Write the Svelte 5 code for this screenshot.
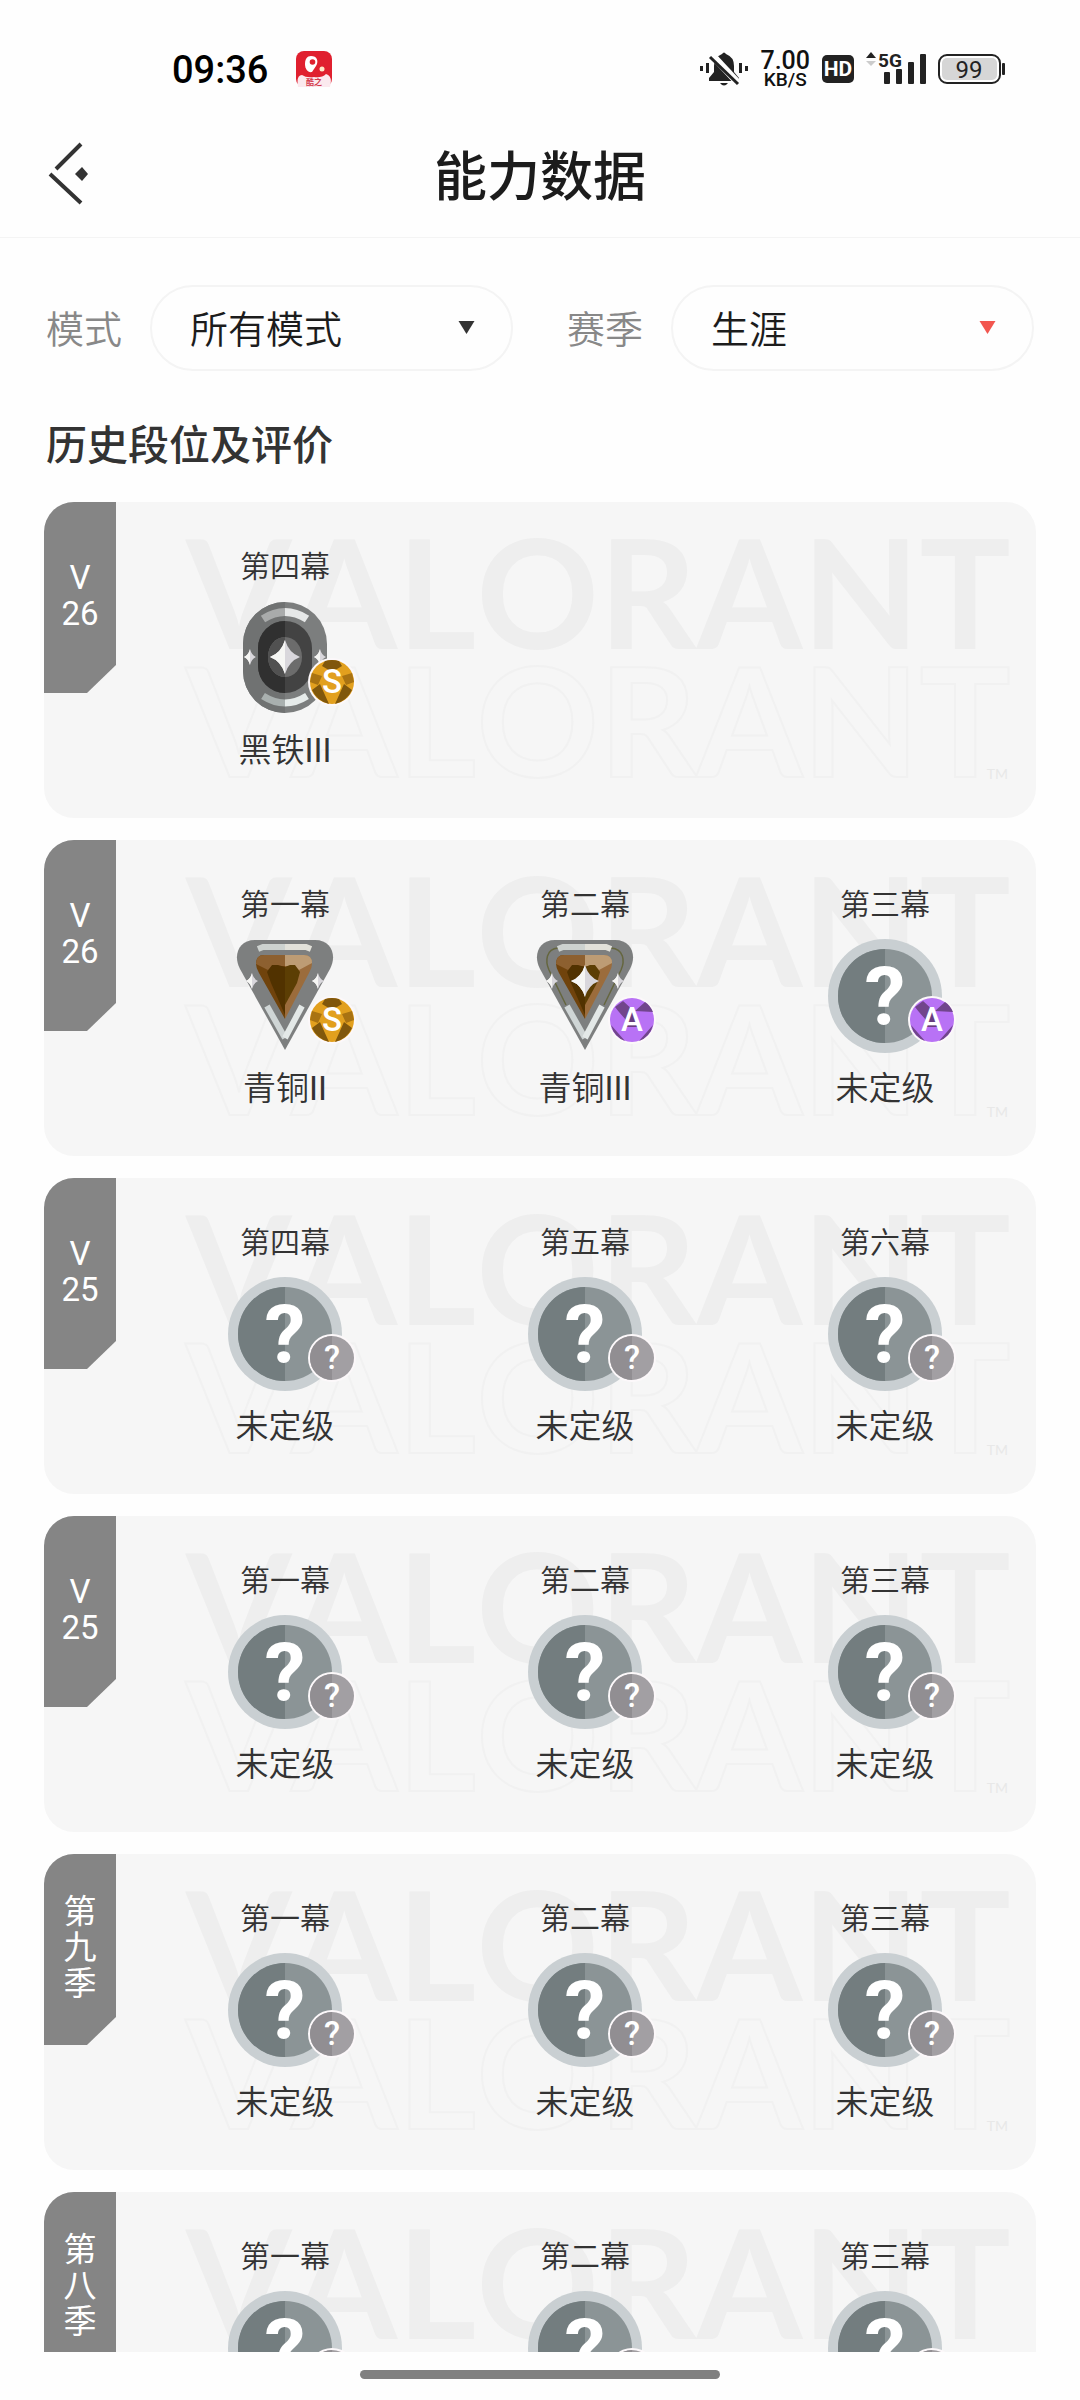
<script lang="ts">
  type Rank = "iron3" | "bronze2" | "bronze3" | "none";
  type Grade = "S" | "A" | "?";
  type Act = { name: string; rank: Rank; grade: Grade };

  const RANK_LABEL: Record<Rank, { name: string; tier: string }> = {
    iron3: { name: "黑铁", tier: "III" },
    bronze2: { name: "青铜", tier: "II" },
    bronze3: { name: "青铜", tier: "III" },
    none: { name: "未定级", tier: "" },
  };

  const WORDMARK = "VALORANT".split("");

  // an act nobody has played yet
  const unranked = (name: string): Act => ({ name, rank: "none", grade: "?" });

  const seasons: { tab: string[]; acts: Act[] }[] = [
    { tab: ["V", "26"], acts: [{ name: "第四幕", rank: "iron3", grade: "S" }] },
    {
      tab: ["V", "26"],
      acts: [
        { name: "第一幕", rank: "bronze2", grade: "S" },
        { name: "第二幕", rank: "bronze3", grade: "A" },
        { name: "第三幕", rank: "none", grade: "A" },
      ],
    },
    { tab: ["V", "25"], acts: ["第四幕", "第五幕", "第六幕"].map(unranked) },
    { tab: ["V", "25"], acts: ["第一幕", "第二幕", "第三幕"].map(unranked) },
    { tab: ["第", "九", "季"], acts: ["第一幕", "第二幕", "第三幕"].map(unranked) },
    { tab: ["第", "八", "季"], acts: ["第一幕", "第二幕", "第三幕"].map(unranked) },
  ];

  let mode = $state("all");
  let season = $state("career");
</script>

{#snippet star(cx: number, cy: number, w: number, h: number)}
  <g transform="translate({cx} {cy}) scale({w} {h})">
    <path d="M0-1Q.25-.25 1 0Q.25.25 0 1Q-.25.25-1 0Q-.25-.25 0-1Z" fill="#d9d7dc" />
    <path d="M0-1Q-.25-.25-1 0Q-.25.25 0 1Z" fill="#f6f6f4" />
  </g>
{/snippet}

{#snippet rankIcon(rank: Rank)}
  <svg class="rank" viewBox="0 0 114 114" aria-hidden="true">
    {#if rank === "iron3"}
      <rect x="15" y="1" width="84" height="111" rx="42" fill="#7c7e7e" />
      <path d="M57 1A42 42 0 0 0 15 43V70A42 42 0 0 0 57 112Z" fill="#707272" />
      <path d="M35 18Q46 11 57 11" fill="none" stroke="#a9abab" stroke-width="8" />
      <path d="M57 11Q68 11 79 18" fill="none" stroke="#e6e8e8" stroke-width="8" />
      <path d="M35 95Q46 102 57 102" fill="none" stroke="#a9b0af" stroke-width="7" />
      <path d="M57 102Q68 102 79 95" fill="none" stroke="#e6ebea" stroke-width="7" />
      <rect x="30" y="20" width="54" height="72" rx="27" fill="#434343" />
      <path d="M57 20A27 27 0 0 0 30 47V65A27 27 0 0 0 57 92Z" fill="#303030" />
      <ellipse cx="57" cy="56" rx="17" ry="20" fill="#6c6c6c" />
      <path d="M57 36A17 20 0 0 0 57 76Z" fill="#515151" />
      {@render star(57, 56, 15, 17)}
      {@render star(22, 56, 6, 8)}
      {@render star(92, 56, 6, 8)}
    {:else if rank === "none"}
      <circle cx="57" cy="57" r="57" fill="#c9cfd2" />
      <circle cx="57" cy="57" r="47" fill="#8b9496" />
      <path d="M57 10A47 47 0 0 0 57 104Z" fill="#737d7f" />
      <text class="mark" x="57" y="86" text-anchor="middle">?</text>
    {:else}
      <path d="M27 1H87C104 1 109 17 102 30L57 111L12 30C5 17 10 1 27 1Z" fill="#7d7f7f" />
      {#if rank === "bronze3"}
        <path
          d="M30 9C18 10 17 22 21 31L38 66M83 9C96 10 97 22 93 31L76 66"
          fill="none"
          stroke="#65663f"
          stroke-width="1.500"
        />
      {/if}
      <path d="M30 10L35 8H57" fill="none" stroke="#cdd2cf" stroke-width="6" />
      <path d="M57 8H78L83 10" fill="none" stroke="#e2e1d9" stroke-width="6" />
      <path d="M39 67L57 99" fill="none" stroke="#cfd5d5" stroke-width="6" />
      <path d="M74 67L57 99" fill="none" stroke="#e3e8e7" stroke-width="6" />
      <path d="M57 16H36Q28 16 28 25Q28 29 31 34L57 80Z" fill="#70430c" />
      <path d="M57 16H36Q28 16 28 25L40 31L44 27H57Z" fill="#8d6030" />
      <path d="M57 16H76Q84 16 84 25Q84 29 81 34L57 80Z" fill="#9b6c3c" />
      <path d="M57 16H76Q84 16 84 24L71 31L67 27H57Z" fill="#bd9c74" />
      <path d="M57 28L50 26H44L39 33L43 44L57 76Z" fill="#513200" />
      <path d="M57 28L62 26H67L72 33L69 44L57 66Z" fill="#5c3e04" />
      {#if rank === "bronze3"}
        {@render star(57, 42, 14, 16)}
      {/if}
      {@render star(24, 42, 6, 8)}
      {@render star(90, 42, 6, 8)}
    {/if}
  </svg>
{/snippet}

{#snippet gradeBadge(grade: Grade)}
  <svg class="badge" viewBox="0 0 48 48" aria-hidden="true">
    <circle cx="24" cy="24" r="24" fill="#fcf8fa" />
    {#if grade === "?"}
      <circle cx="24" cy="24" r="22" fill="#a29fa3" />
      <path d="M24 2A22 22 0 0 0 24 46Z" fill="#918e92" />
    {:else if grade === "S"}
      <circle cx="24" cy="24" r="22" fill="#e2a01e" />
      <path d="M17 3Q24 1 31 3L34 8L24 14L14 8Z" fill="#80570c" />
      <path d="M4 15L14 18L10 27L2 24ZM44 15L34 18L38 27L46 24Z" fill="#a97312" />
      <path d="M4 32L12 26L21 46Q9 43 4 32ZM44 32L36 26L27 46Q39 43 44 32Z" fill="#80570c" />
    {:else}
      <circle cx="24" cy="24" r="22" fill="#b872f5" />
      <path d="M7 11L15 5L26 15L18 24L11 16ZM27 15L37 6Q42 9 45 16Z" fill="#71458c" />
      <path d="M3 29L17 45Q6 41 3 29ZM45 29L31 45Q42 41 45 29Z" fill="#71458c" />
      <path d="M24 14L31 31H17Z" fill="#683d80" />
    {/if}
    <text class="letter" x="24" y="35" text-anchor="middle">{grade}</text>
  </svg>
{/snippet}

<div class="screen">
  <div class="status">
    <div class="side">
      <span class="time">09:36</span>
      <svg width="36" height="36" viewBox="0 0 36 36" aria-hidden="true">
        <rect width="36" height="36" rx="8" fill="#e0202f" />
        <path d="M2 36Q0 24 6 24Q10 27 18 26Q26 27 30 23Q37 25 34 36Z" fill="#fbe9ee" />
        <path d="M15 5C21 5 23 10 20 15L16 21C12 22 9 18 9 13C9 8 11 5 15 5Z" fill="#fff" />
        <circle cx="16.500" cy="11" r="2.800" fill="#e0202f" />
        <circle cx="26" cy="18" r="2.500" fill="#ffe9c9" />
        <text class="app-name" x="18" y="34" text-anchor="middle">酷之</text>
      </svg>
    </div>

    <div class="side right">
      <svg width="48" height="34" viewBox="0 0 48 34" fill="#222" aria-hidden="true">
        <rect x="0" y="14" width="3" height="5" />
        <rect x="6" y="11" width="3" height="10" />
        <rect x="39" y="11" width="3" height="10" />
        <rect x="45" y="14" width="3" height="5" />
        <path d="M22 2Q24-1 26 2Q34 5 34 14V20L39 26V29H9V26L14 20V14Q14 5 22 2Z" />
        <path d="M20 31H28Q24 36 20 31Z" />
        <path d="M12 3L39 32" stroke="#fefefe" stroke-width="7" />
        <path d="M10 5L38 32" stroke="#222" stroke-width="3" />
      </svg>
      <span class="speed"><b>7.00</b><small>KB/S</small></span>
      <span class="hd">HD</span>
      <svg width="60" height="34" viewBox="0 0 60 34" fill="#222" aria-hidden="true">
        <path d="M0 6L5 0L10 6Z" />
        <path d="M0 9L5 14L10 9Z" fill="#ccc" />
        <text class="net" x="12" y="15">5G</text>
        <rect x="18" y="20" width="6" height="12" rx="1" />
        <rect x="30" y="17" width="6" height="15" rx="1" />
        <rect x="42" y="10" width="6" height="22" rx="1" />
        <rect x="54" y="2" width="6" height="30" rx="1" />
      </svg>
      <svg width="67" height="30" viewBox="0 0 67 30" aria-hidden="true">
        <rect x="1" y="1" width="61" height="28" rx="8" fill="#fefefe" stroke="#222" stroke-width="2" />
        <rect x="4" y="4" width="55" height="22" rx="5" fill="#d6d6d6" />
        <rect x="64" y="9" width="3" height="12" rx="1" fill="#222" />
        <text class="charge" x="31" y="24" text-anchor="middle">99</text>
      </svg>
    </div>
  </div>

  <header>
    <button class="back" aria-label="返回">
      <svg width="42" height="64" viewBox="0 0 42 64" aria-hidden="true">
        <path d="M34 3L9 28M3 33L34 62" fill="none" stroke="#333" stroke-width="4" />
        <path d="M35 26L41 33L35 40L28 33Z" fill="#333" />
      </svg>
    </button>
    <h1>能力数据</h1>
  </header>

  <main>
    <div class="filters">
      <div class="filter">
        <label for="mode">模式</label>
        <div class="picker">
          <select id="mode" bind:value={mode}>
            <option value="all">所有模式</option>
          </select>
          <svg class="caret" viewBox="0 0 16 13" aria-hidden="true"><path d="M0 0H16L8 13Z" /></svg>
        </div>
      </div>
      <div class="filter">
        <label for="season">赛季</label>
        <div class="picker">
          <select id="season" bind:value={season}>
            <option value="career">生涯</option>
          </select>
          <svg class="caret active" viewBox="0 0 16 13" aria-hidden="true"><path d="M0 0H16L8 13Z" /></svg>
        </div>
      </div>
    </div>

    <h2>历史段位及评价</h2>

    <div class="seasons">
      {#each seasons as item}
        <section class="card">
          <div class="watermark" aria-hidden="true">
            <div class="word">{#each WORDMARK as ch}<span>{ch}</span>{/each}</div>
            <div class="word outline">{#each WORDMARK as ch}<span>{ch}</span>{/each}</div>
            <span class="tm">TM</span>
          </div>
          <div class="tab">
            {#each item.tab as line}<span>{line}</span>{/each}
          </div>
          <div class="acts">
            {#each item.acts as act}
              <div class="act">
                <span class="act-name">{act.name}</span>
                <div class="emblem">
                  {@render rankIcon(act.rank)}
                  {@render gradeBadge(act.grade)}
                </div>
                <span class="act-rank">{RANK_LABEL[act.rank].name}<span class="tier">{RANK_LABEL[act.rank].tier}</span></span>
              </div>
            {/each}
          </div>
        </section>
      {/each}
    </div>
  </main>

  <div class="home"><span></span></div>
</div>

<style>
  :global(body) {
    margin: 0;
    background: #fefefe;
  }
  .screen {
    display: flex;
    flex-direction: column;
    height: 100vh;
    overflow: hidden;
    color: #333;
    font-family: Roboto, "Noto Sans CJK SC", sans-serif;
  }

  /* status bar */
  .status {
    display: flex;
    flex: none;
    justify-content: space-between;
    align-items: center;
    height: 46px;
    padding: 46px 75px 0 172px;
    color: #111;
  }
  .side {
    display: flex;
    align-items: center;
    gap: 28px;
  }
  .side.right {
    gap: 12px;
  }
  .time {
    padding-top: 2px;
    font-size: 38px;
    font-weight: 500;
    line-height: 46px;
    color: #000;
  }
  .app-name {
    font-size: 8px;
    font-weight: 700;
    fill: #d33a4c;
  }
  .speed {
    display: flex;
    flex-direction: column;
    align-items: center;
    padding-top: 2px;
    font-weight: 500;
  }
  .speed b {
    font-size: 25px;
    font-weight: 500;
    line-height: 20px;
  }
  .speed small {
    font-size: 19px;
    line-height: 18px;
  }
  .hd {
    width: 32px;
    border-radius: 5px;
    background: #222;
    color: #fff;
    font-size: 21px;
    font-weight: 700;
    line-height: 28px;
    text-align: center;
  }
  .net {
    font-size: 19px;
    font-weight: 700;
  }
  .charge {
    font-size: 24px;
    fill: #222;
  }

  /* title bar */
  header {
    display: grid;
    grid-template-columns: 120px 1fr 120px;
    flex: none;
    align-items: center;
    height: 123px;
    padding-top: 22px;
    border-bottom: 1px solid #f4f4f4;
  }
  .back {
    display: flex;
    padding: 0 0 6px 47px;
    border: 0;
    background: none;
    cursor: pointer;
  }
  h1 {
    margin: 0;
    padding-top: 5px;
    color: #1c1c1c;
    font-size: 53px;
    font-weight: 500;
    line-height: 64px;
    text-align: center;
  }

  main {
    flex: 1;
    min-height: 0;
    padding: 47px 44px 0;
    overflow: hidden;
  }
  .filters {
    display: grid;
    grid-template-columns: 1fr 1fr;
    gap: 54px;
    padding: 0 2px;
  }
  .filter {
    display: flex;
    align-items: center;
    gap: 28px;
  }
  .filter label {
    padding-top: 3px;
    color: #888;
    font-size: 38px;
    font-weight: 350;
    line-height: 48px;
  }
  .picker {
    position: relative;
    flex: 1;
  }
  select {
    display: block;
    width: 100%;
    height: 86px;
    padding: 3px 70px 0 38px;
    border: 2px solid #f4f4f4;
    border-radius: 43px;
    appearance: none;
    background: #fefefe;
    color: #1c1c1c;
    font-family: inherit;
    font-size: 38px;
    font-weight: 350;
  }
  .caret {
    position: absolute;
    top: 36px;
    right: 38px;
    width: 17px;
    height: 13px;
    fill: #333;
    pointer-events: none;
  }
  .caret.active {
    fill: #f2564f;
  }
  h2 {
    margin: 50px 0 31px 2px;
    font-size: 41px;
    font-weight: 500;
    line-height: 50px;
  }

  /* season cards */
  .seasons {
    display: flex;
    flex-direction: column;
    gap: 22px;
  }
  .card {
    position: relative;
    border-radius: 30px;
    background: #f6f6f6;
    overflow: hidden;
  }
  .tab {
    position: absolute;
    top: 0;
    left: 0;
    display: flex;
    flex-direction: column;
    align-items: center;
    justify-content: center;
    box-sizing: border-box;
    width: 72px;
    height: 191px;
    padding-bottom: 3px;
    background: #858585;
    clip-path: polygon(0 0, 100% 0, 100% 163px, 43px 100%, 0 100%);
    color: #fff;
    font-size: 33px;
    line-height: 36px;
  }
  .watermark {
    position: absolute;
    inset: 24px 40px 0 142px;
    font-family: Lato, sans-serif;
  }
  .word {
    display: flex;
    justify-content: space-between;
    height: 128px;
    color: #eee;
    font-size: 152px;
    font-weight: 700;
    line-height: 128px;
  }
  .word.outline {
    color: #f6f6f6;
    -webkit-text-stroke: 2px #f1f1f1;
  }
  .tm {
    position: absolute;
    right: -12px;
    bottom: 36px;
    color: #e8e8e8;
    font-size: 14px;
    line-height: 16px;
  }
  .acts {
    position: relative;
    display: grid;
    grid-template-columns: repeat(3, 1fr);
    padding: 47px 1px 47px 91px;
  }
  .act {
    display: flex;
    flex-direction: column;
    align-items: center;
    font-weight: 350;
  }
  .act-name {
    font-size: 30px;
    line-height: 36px;
  }
  .emblem {
    position: relative;
    width: 114px;
    height: 114px;
    margin: 16px 0;
  }
  .rank {
    display: block;
    width: 100%;
    height: 100%;
  }
  .badge {
    position: absolute;
    top: 57px;
    left: 80px;
    width: 48px;
    height: 48px;
  }
  .mark {
    fill: #fff;
    font-size: 82px;
    font-weight: 700;
  }
  .letter {
    fill: #fff;
    font-size: 33px;
    font-weight: 500;
  }
  .act-rank {
    font-size: 33px;
    line-height: 40px;
  }
  .tier {
    font-weight: 400;
  }

  .home {
    display: flex;
    flex: none;
    justify-content: center;
    height: 30px;
    padding-top: 18px;
  }
  .home span {
    width: 33.3%;
    height: 9px;
    border-radius: 5px;
    background: #808080;
  }
</style>
